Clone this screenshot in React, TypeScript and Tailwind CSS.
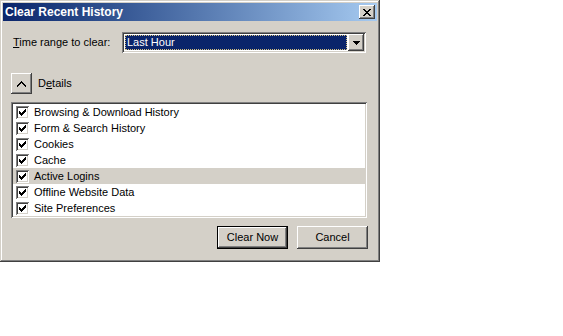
import React from 'react';

const items = [
  'Browsing & Download History',
  'Form & Search History',
  'Cookies',
  'Cache',
  'Active Logins',
  'Offline Website Data',
  'Site Preferences',
];

// classic 3d edges
const raised = 'shadow-[inset_-1px_-1px_#404040,inset_1px_1px_#ffffff,inset_-2px_-2px_#808080,inset_2px_2px_#d4d0c8]';
const sunken = 'shadow-[inset_1px_1px_#808080,inset_-1px_-1px_#ffffff,inset_2px_2px_#404040,inset_-2px_-2px_#d4d0c8]';

function Check() {
  return (
    <div className={`w-[13px] h-[13px] bg-white flex items-center justify-center ${sunken}`}>
      <svg width="7" height="7" viewBox="0 0 7 7">
        <path d="M0 2h1v1h1v1h1v-1h1v-1h1v-1h1v-1h1v3h-1v1h-1v1h-1v1h-1v1h-1v-1h-1v-1h-1z" fill="#000" />
      </svg>
    </div>
  );
}

export default function App() {
  return (
    <div className="w-[563px] h-[336px] bg-white" style={{ fontFamily: '"Liberation Sans", Arial, sans-serif' }}>
      <div className="w-[380px] h-[262px] bg-[#d4d0c8] p-[3px] flex flex-col shadow-[inset_-1px_-1px_#404040,inset_1px_1px_#d4d0c8,inset_-2px_-2px_#808080,inset_2px_2px_#ffffff]">
        {/* Title bar */}
        <div className="h-[18px] bg-gradient-to-r from-[#0a246a] to-[#a6caf0] flex items-center justify-between pl-[2px] pr-[2px]">
          <span className="text-white font-bold text-[12px] leading-none">Clear Recent History</span>
          <div className={`w-[16px] h-[14px] bg-[#d4d0c8] flex items-center justify-center ${raised}`}>
            <svg width="8" height="7" viewBox="0 0 8 7">
              <path d="M0 0h2v1h1v1h2v-1h1v-1h2v1h-1v1h-1v1h-1v1h1v1h1v1h1v1h-2v-1h-1v-1h-2v1h-1v1h-2v-1h1v-1h1v-1h1v-1h-1v-1h-1v-1h-1z" fill="#000" />
            </svg>
          </div>
        </div>

        {/* Time range */}
        <div className="flex items-center mt-[11px] pl-[10px]">
          <span className="text-[11px] text-black w-[109px]">
            <span className="underline">T</span>ime range to clear:
          </span>
          <div className={`w-[244px] h-[21px] bg-white p-[2px] flex ${sunken}`}>
            <div className="flex-1 p-[1px]">
              <div className="h-full bg-[#0a246a] outline-1 outline-dotted outline-[#d4c080] -outline-offset-1 flex items-center pl-[2px]">
                <span className="text-white text-[11px] leading-none">Last Hour</span>
              </div>
            </div>
            <div className={`w-[16px] h-[17px] bg-[#d4d0c8] flex items-center justify-center ${raised}`}>
              <svg width="7" height="4" viewBox="0 0 7 4">
                <path d="M0 0h7v1h-1v1h-1v1h-1v1h-1v-1h-1v-1h-1v-1h-1z" fill="#000" />
              </svg>
            </div>
          </div>
        </div>

        {/* Details */}
        <div className="flex items-center mt-[20px] pl-[8px]">
          <div className={`w-[21px] h-[21px] bg-[#d4d0c8] flex items-center justify-center ${raised}`}>
            <svg width="9" height="6" viewBox="0 0 9 6">
              <path d="M4 0h1v1h1v1h1v1h1v1h1v2h-1v-1h-1v-1h-1v-1h-1v-1h-1v1h-1v1h-1v1h-1v1h-1v-2h1v-1h1v-1h1v-1h1z" fill="#000" />
            </svg>
          </div>
          <span className="text-[11px] text-black ml-[6px]">
            D<span className="underline">e</span>tails
          </span>
        </div>

        {/* List */}
        <div className={`ml-[8px] mt-[8px] w-[356px] h-[116px] bg-white p-[2px] ${sunken}`}>
          {items.map((item, i) => (
            <div
              key={item}
              className={`h-[16px] flex items-center pl-[3px] ${i === 4 ? 'bg-[#d4d0c8]' : ''}`}
            >
              <Check />
              <span className="ml-[5px] text-[11px] text-black leading-none">{item}</span>
            </div>
          ))}
        </div>

        {/* Buttons */}
        <div className="flex justify-end gap-[9px] mt-[8px] pr-[9px]">
          <button className="w-[71px] h-[23px] bg-[#d4d0c8] border border-black flex items-center justify-center p-0">
            <div className={`w-full h-full flex items-center justify-center text-[11px] text-black ${raised}`}>
              Clear Now
            </div>
          </button>
          <button className={`w-[71px] h-[23px] bg-[#d4d0c8] flex items-center justify-center text-[11px] text-black ${raised}`}>
            Cancel
          </button>
        </div>
      </div>
    </div>
  );
}
